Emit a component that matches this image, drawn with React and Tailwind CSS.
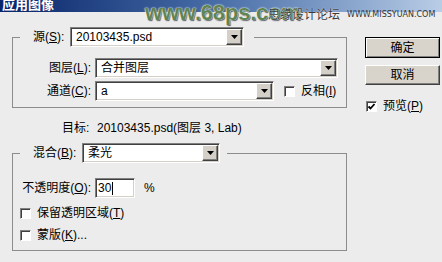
import React from 'react'

function DropArrow() {
  return (
    <svg width="7" height="4" viewBox="0 0 7 4">
      <path d="M0 0 H7 L3.5 4 Z" fill="#000" />
    </svg>
  )
}

function Combo({ value, className = '' }) {
  return (
    <div
      className={`flex h-[20px] items-stretch border border-t-[#808080] border-l-[#808080] border-b-white border-r-white bg-white shadow-[inset_1px_1px_0_#404040,inset_-1px_-1px_0_#d4d0c8] ${className}`}
    >
      <div className="flex flex-1 items-center pl-[5px] leading-[16px] text-black">{value}</div>
      <div className="my-[1px] mr-[1px] flex w-[16px] items-center justify-center border border-t-white border-l-white border-b-[#404040] border-r-[#404040] bg-[#d4d0c8] shadow-[inset_-1px_-1px_0_#808080]">
        <DropArrow />
      </div>
    </div>
  )
}

function CheckBox({ checked = false }) {
  return (
    <div className="flex h-[11px] w-[11px] shrink-0 items-center justify-center border border-t-[#808080] border-l-[#808080] border-b-white border-r-white bg-white shadow-[inset_1px_1px_0_#404040]">
      {checked ? (
        <svg width="9" height="9" viewBox="0 0 9 9">
          <path d="M1.5 4.5 L3.5 6.5 L7.5 2" fill="none" stroke="#000" strokeWidth="1.8" />
        </svg>
      ) : null}
    </div>
  )
}

function Key({ children }) {
  return <u className="underline-offset-[1px]">{children}</u>
}

export default function App() {
  return (
    <div className="relative h-[262px] w-[442px] overflow-hidden bg-[#ececec] font-['Liberation_Sans','Noto_Sans_CJK_SC',sans-serif] text-[12px] text-black">
      <div className="h-[12px] overflow-hidden bg-gradient-to-r from-[#0a246a] via-[#4a6fa8] to-[#b9cde6]">
        <div className="-mt-[2px] pl-[2px] text-[13px] leading-[13px] font-bold text-white">应用图像</div>
      </div>

      <div className="flex">
        <div className="ml-[12px] w-[335px]">
          <fieldset className="mt-[15px] border border-[#8c8c8c] px-0 pb-[6px]">
            <legend className="ml-[7px] pl-[13px] pr-[10px]">
              <div className="flex items-center">
                <span className="w-[37px] leading-[16px]">
                  源(<Key>S</Key>):
                </span>
                <Combo value="20103435.psd" className="w-[174px]" />
              </div>
            </legend>
            <div className="mt-[11px] flex items-center">
              <span className="w-[78px] text-right leading-[16px]">
                图层(<Key>L</Key>):
              </span>
              <Combo value="合并图层" className="ml-[4px] w-[243px]" />
            </div>
            <div className="mt-[3px] flex items-center">
              <span className="w-[78px] text-right leading-[16px]">
                通道(<Key>C</Key>):
              </span>
              <Combo value="a" className="ml-[4px] w-[179px]" />
              <div className="ml-[10px]">
                <CheckBox />
              </div>
              <span className="ml-[6px] leading-[16px]">
                反相(<Key>I</Key>)
              </span>
            </div>
          </fieldset>

          <div className="mt-[12px] flex h-[16px] items-center pl-[50px] leading-[16px]">
            <span className="w-[35px]">目标:</span>
            <span>20103435.psd(图层 3, Lab)</span>
          </div>

          <fieldset className="mt-[7px] border border-[#8c8c8c] px-0 pb-[7px]">
            <legend className="ml-[7px] pl-[13px] pr-[7px]">
              <div className="flex items-center">
                <span className="w-[49px] leading-[16px]">
                  混合(<Key>B</Key>):
                </span>
                <Combo value="柔光" className="w-[138px]" />
              </div>
            </legend>
            <div className="mt-[15px] flex items-center">
              <span className="w-[78px] text-right leading-[16px]">
                不透明度(<Key>O</Key>):
              </span>
              <div className="ml-[4px] flex h-[20px] w-[40px] items-center border border-t-[#808080] border-l-[#808080] border-b-white border-r-white bg-white pl-[2px] shadow-[inset_1px_1px_0_#404040,inset_-1px_-1px_0_#d4d0c8]">
                <span className="leading-[16px]">30</span>
                <span className="ml-[1px] h-[13px] w-[1px] bg-black" />
              </div>
              <span className="ml-[9px] leading-[16px]">%</span>
            </div>
            <div className="mt-[7px] flex h-[16px] items-center pl-[7px]">
              <CheckBox />
              <span className="ml-[6px] leading-[16px]">
                保留透明区域(<Key>T</Key>)
              </span>
            </div>
            <div className="mt-[6px] flex h-[16px] items-center pl-[7px]">
              <CheckBox />
              <span className="ml-[6px] leading-[16px]">
                蒙版(<Key>K</Key>)...
              </span>
            </div>
          </fieldset>
        </div>

        <div className="ml-[18px] w-[75px]">
          <button
            type="button"
            className="mt-[25px] flex h-[21px] w-[75px] items-center justify-center border border-black bg-[#d8d4cc] leading-[16px] shadow-[inset_1px_1px_0_#fff,inset_-1px_-1px_0_#808080]"
          >
            确定
          </button>
          <button
            type="button"
            className="mt-[7px] flex h-[20px] w-[75px] items-center justify-center border border-t-white border-l-white border-b-[#404040] border-r-[#404040] bg-[#d8d4cc] leading-[16px] shadow-[inset_-1px_-1px_0_#808080]"
          >
            取消
          </button>
          <div className="mt-[13px] flex h-[16px] items-center pl-[1px]">
            <CheckBox checked />
            <span className="ml-[6px] leading-[16px]">
              预览(<Key>P</Key>)
            </span>
          </div>
        </div>
      </div>

      {/* watermark over the title bar */}
      <div className="pointer-events-none absolute left-[145px] top-[0px] whitespace-nowrap text-[22px] leading-[26px] font-bold tracking-[-0.2px] text-[#5f8455] [text-shadow:0_0_1px_#fff,0_0_2px_#f4fff0,1px_1px_1px_#334]">
        www.68ps.com
      </div>
      <div className="pointer-events-none absolute left-[268px] top-[8px] flex items-center whitespace-nowrap">
        <span className="text-[12px] leading-[14px] text-[#3b3b3b] [text-shadow:0_0_1px_#fff]">思缘设计论坛</span>
        <span className="ml-[7px] font-['DejaVu_Sans',sans-serif] text-[8px] leading-[14px] text-[#333]">WWW.MISSYUAN.COM</span>
      </div>
    </div>
  )
}
